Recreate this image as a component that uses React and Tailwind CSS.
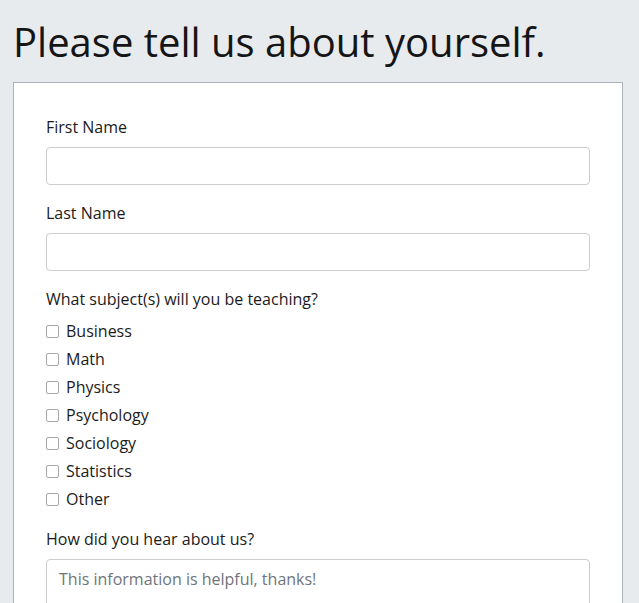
import React from 'react';

const subjects = ['Business', 'Math', 'Physics', 'Psychology', 'Sociology', 'Statistics', 'Other'];

export default function App() {
  return (
    <div
      className="min-h-[603px] bg-[#e8ebee] pl-[13px] pt-[18px] text-[#1b1b1b]"
      style={{ fontFamily: '"Open Sans", sans-serif' }}
    >
      <h1 className="mb-4 text-[40px] leading-[48px] text-[#151515]">Please tell us about yourself.</h1>

      <div className="w-[610px] border border-[#aab4be] bg-white px-8 pt-8 pb-10">
        <label className="mb-2 block text-base leading-6">First Name</label>
        <input className="block h-[38px] w-full rounded border border-[#cdcdcd] px-3 outline-none" />

        <label className="mt-4 mb-2 block text-base leading-6">Last Name</label>
        <input className="block h-[38px] w-full rounded border border-[#cdcdcd] px-3 outline-none" />

        <div className="mt-4 text-base leading-6">What subject(s) will you be teaching?</div>
        <div className="mt-[6px] flex flex-col">
          {subjects.map((s) => (
            <label key={s} className="flex h-7 items-center gap-[7px] text-base">
              <span className="block h-[13px] w-[13px] rounded-[2px] border border-[#a8a8a8] bg-white" />
              {s}
            </label>
          ))}
        </div>

        <label className="mt-[14px] mb-2 block text-base leading-6">How did you hear about us?</label>
        <textarea
          className="block h-[100px] w-full resize-none rounded border border-[#cdcdcd] px-3 py-[7px] text-base leading-6 outline-none placeholder:text-[#6f757b]"
          placeholder="This information is helpful, thanks!"
        />
      </div>
    </div>
  );
}
